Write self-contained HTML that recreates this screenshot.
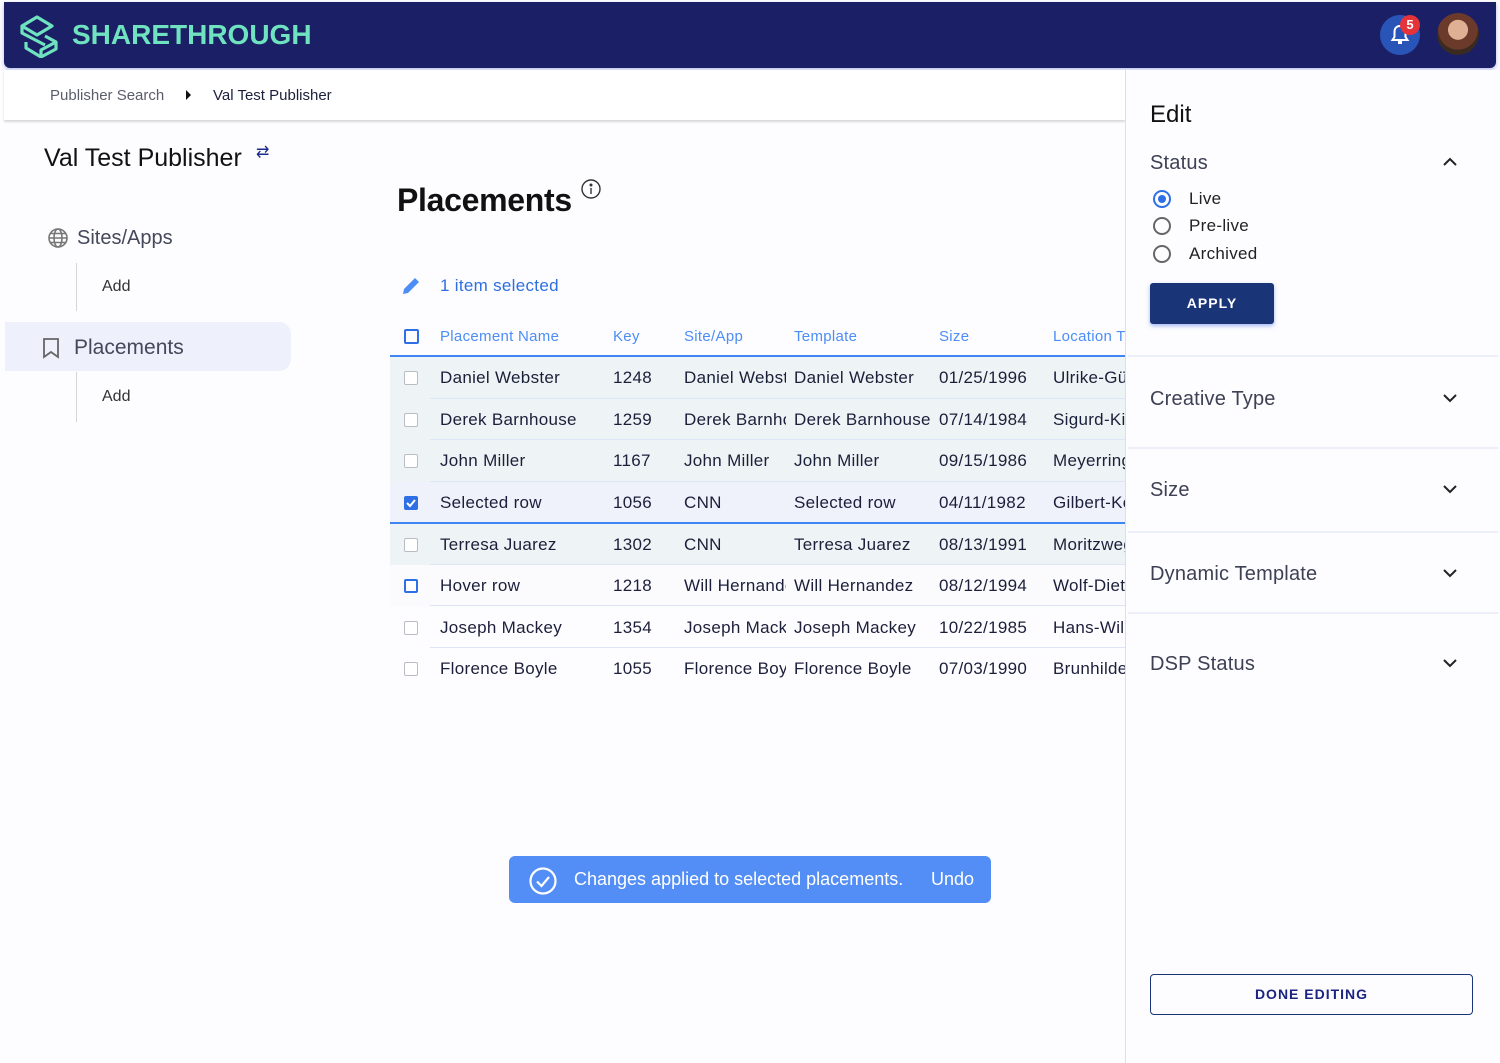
<!DOCTYPE html>
<html><head><meta charset="utf-8"><style>
*{box-sizing:border-box;margin:0;padding:0}
body{width:1500px;height:1063px;position:relative;background:#fdfdff;font-family:"Liberation Sans",Arial,sans-serif;overflow:hidden;color:#1c1f3a}
.a{position:absolute}
.hdr{left:4px;top:2px;width:1492px;height:66px;background:#1b1f66;border-radius:0 0 6px 6px;box-shadow:0 2px 4px rgba(60,80,200,.35)}
.logo{left:72px;top:19px;font-size:28px;font-weight:bold;color:#6fe3bf;letter-spacing:0}
.crumb{left:4px;top:70px;width:1121px;height:50px;background:#fff;box-shadow:0 2px 2px rgba(0,0,0,.15)}
.panel{left:1125px;top:70px;width:375px;height:993px;background:#fdfdff;border-left:1px solid #d9def0}
.row{position:absolute;left:390px;width:735px;height:42px;font-size:17px;color:#1c1f3a;letter-spacing:.3px}
.row span{position:absolute;top:11px;white-space:nowrap;overflow:hidden}
.cb{position:absolute;left:14px;top:14px;width:14px;height:14px;border:1.5px solid #b9bcc4;border-radius:2px;background:#fff}
.sep{position:absolute;left:430px;width:695px;height:1px;background:#dde6f6}
.th{position:absolute;top:328px;font-size:15px;color:#4c8df6;letter-spacing:.3px}
.acc{position:absolute;left:1150px;font-size:20px;color:#3e4054;letter-spacing:.2px}
.hr{position:absolute;left:1128px;width:370px;height:2px;background:#eceff8}
.chev{position:absolute;left:1442px}
</style></head><body>
<div class="a hdr"></div>
<svg class="a" style="left:18px;top:12px" width="44" height="46" viewBox="0 0 44 46" fill="none" stroke="#6fe3bf" stroke-width="3.2" stroke-linejoin="round">
<path d="M4 14 L19 5 L34 14 L19 23 Z"/><path d="M4 14 V21 L27 33"/><path d="M27 24 L38 30 V37 L23 45 L8 36 V30"/><path d="M23 45 V38 L38 30"/></svg>
<div class="a logo">SHARETHROUGH</div>
<div class="a" style="left:1380px;top:15px;width:40px;height:40px;border-radius:50%;background:#2a55b8"></div>
<svg class="a" style="left:1390px;top:24px" width="20" height="22" viewBox="0 0 20 22"><path d="M10 2 C6 2 4.5 5 4.5 8 V13 L2.5 16 H17.5 L15.5 13 V8 C15.5 5 14 2 10 2Z" fill="none" stroke="#fff" stroke-width="2"/><rect x="8" y="17" width="4" height="3" fill="#fff"/></svg>
<div class="a" style="left:1400px;top:15px;width:20px;height:20px;border-radius:50%;background:#e5333a;color:#fff;font-size:13px;font-weight:bold;text-align:center;line-height:20px">5</div>
<div class="a" style="left:1437px;top:13px;width:42px;height:42px;border-radius:50%;background:radial-gradient(circle at 50% 40%,#e0b095 0 30%,#6b3a2a 31% 60%,#3a2a20 61%)"></div>

<div class="a crumb"></div>
<div class="a" style="left:50px;top:87px;font-size:15px;color:#5b5d6b">Publisher Search</div>
<div class="a" style="left:186px;top:90px;width:0;height:0;border-left:5px solid #111;border-top:5px solid transparent;border-bottom:5px solid transparent"></div>
<div class="a" style="left:213px;top:87px;font-size:15px;color:#1c1f3a">Val Test Publisher</div>

<div class="a" style="left:44px;top:144px;font-size:25px;color:#111">Val Test Publisher</div>
<div class="a" style="left:256px;top:142px;font-size:16px;color:#1b2c8a">⇄</div>
<svg class="a" style="left:47px;top:227px" width="22" height="22" viewBox="0 0 22 22" fill="none" stroke="#777" stroke-width="1.6"><circle cx="11" cy="11" r="9"/><ellipse cx="11" cy="11" rx="4" ry="9"/><path d="M2 11H20M3.5 6.5H18.5M3.5 15.5H18.5"/></svg>
<div class="a" style="left:77px;top:227px;font-size:20px;color:#45475a">Sites/Apps</div>
<div class="a" style="left:76px;top:263px;width:1px;height:48px;background:#d5d5d5"></div>
<div class="a" style="left:102px;top:278px;font-size:16px;color:#333">Add</div>
<div class="a" style="left:5px;top:322px;width:286px;height:49px;background:#eef0fc;border-radius:0 12px 12px 0"></div>
<svg class="a" style="left:42px;top:337px" width="18" height="22" viewBox="0 0 18 22" fill="none" stroke="#666" stroke-width="1.8"><path d="M2 2H16V20L9 15L2 20Z"/></svg>
<div class="a" style="left:74px;top:336px;font-size:21px;color:#45475a">Placements</div>
<div class="a" style="left:76px;top:372px;width:1px;height:50px;background:#d5d5d5"></div>
<div class="a" style="left:102px;top:388px;font-size:16px;color:#333">Add</div>

<div class="a" style="left:397px;top:182px;font-size:32px;font-weight:bold;color:#111;letter-spacing:-0.3px">Placements</div>
<svg class="a" style="left:580px;top:178px" width="22" height="22" viewBox="0 0 22 22" fill="none" stroke="#333" stroke-width="1.4"><circle cx="11" cy="11" r="9"/><path d="M11 10V16"/><circle cx="11" cy="7" r=".8" fill="#333"/></svg>
<svg class="a" style="left:400px;top:275px" width="22" height="22" viewBox="0 0 22 22"><path d="M3 19 L4 14 L15 3 L19 7 L8 18 Z" fill="#4c8df6"/></svg>
<div class="a" style="left:440px;top:276px;font-size:17px;color:#2d6fe0;letter-spacing:.3px">1 item selected</div>

<div class="a" style="left:404px;top:329px;width:15px;height:15px;border:2px solid #2f6fe6;border-radius:2px"></div>
<div class="th" style="left:440px">Placement Name</div>
<div class="th" style="left:613px">Key</div>
<div class="th" style="left:684px">Site/App</div>
<div class="th" style="left:794px">Template</div>
<div class="th" style="left:939px">Size</div>
<div class="th" style="left:1053px;width:72px;overflow:hidden;white-space:nowrap">Location Type</div>
<div class="a" style="left:390px;top:355px;width:735px;height:2px;background:#3f86f2"></div>

<div class="row" style="top:357px;background:#eef4f5"><div class="cb"></div><span style="left:50px">Daniel Webster</span><span style="left:223px">1248</span><span style="left:294px;width:102px">Daniel Webster</span><span style="left:404px">Daniel Webster</span><span style="left:549px">01/25/1996</span><span style="left:663px;width:72px">Ulrike-Günther</span></div>
<div class="row" style="top:399px;background:#eef4f5"><div class="cb"></div><span style="left:50px">Derek Barnhouse</span><span style="left:223px">1259</span><span style="left:294px;width:102px">Derek Barnhouse</span><span style="left:404px">Derek Barnhouse</span><span style="left:549px">07/14/1984</span><span style="left:663px;width:72px">Sigurd-Kirsten</span></div>
<div class="row" style="top:440px;background:#eef4f5"><div class="cb"></div><span style="left:50px">John Miller</span><span style="left:223px">1167</span><span style="left:294px;width:102px">John Miller</span><span style="left:404px">John Miller</span><span style="left:549px">09/15/1986</span><span style="left:663px;width:72px">Meyerring</span></div>
<div class="row" style="top:482px;background:#eff1fb"><div class="cb" style="background:#2f6fe6;border-color:#2f6fe6"><svg width="12" height="12" viewBox="0 0 12 12" style="position:absolute;left:0;top:0"><path d="M2 6 L5 9 L10 3" fill="none" stroke="#fff" stroke-width="2"/></svg></div><span style="left:50px">Selected row</span><span style="left:223px">1056</span><span style="left:294px">CNN</span><span style="left:404px">Selected row</span><span style="left:549px">04/11/1982</span><span style="left:663px;width:72px">Gilbert-Kern</span></div>
<div class="a" style="left:390px;top:522px;width:735px;height:2px;background:#3f86f2"></div>
<div class="row" style="top:524px;background:#eef4f5"><div class="cb"></div><span style="left:50px">Terresa Juarez</span><span style="left:223px">1302</span><span style="left:294px">CNN</span><span style="left:404px">Terresa Juarez</span><span style="left:549px">08/13/1991</span><span style="left:663px;width:72px">Moritzweg</span></div>
<div class="row" style="top:565px;background:#fbfbfe"><div class="cb" style="border:2px solid #2f6fe6"></div><span style="left:50px">Hover row</span><span style="left:223px">1218</span><span style="left:294px;width:102px">Will Hernandez</span><span style="left:404px">Will Hernandez</span><span style="left:549px">08/12/1994</span><span style="left:663px;width:72px">Wolf-Dieter</span></div>
<div class="row" style="top:607px"><div class="cb"></div><span style="left:50px">Joseph Mackey</span><span style="left:223px">1354</span><span style="left:294px;width:102px">Joseph Mackey</span><span style="left:404px">Joseph Mackey</span><span style="left:549px">10/22/1985</span><span style="left:663px;width:72px">Hans-Wilhelm</span></div>
<div class="row" style="top:648px"><div class="cb"></div><span style="left:50px">Florence Boyle</span><span style="left:223px">1055</span><span style="left:294px;width:102px">Florence Boyle</span><span style="left:404px">Florence Boyle</span><span style="left:549px">07/03/1990</span><span style="left:663px;width:72px">Brunhilde</span></div>
<div class="sep" style="top:398px"></div><div class="sep" style="top:439px"></div><div class="sep" style="top:481px"></div><div class="sep" style="top:564px"></div><div class="sep" style="top:605px"></div><div class="sep" style="top:647px"></div>

<div class="a" style="left:509px;top:856px;width:482px;height:47px;background:#528ef5;border-radius:6px"></div>
<svg class="a" style="left:528px;top:866px" width="30" height="30" viewBox="0 0 30 30" fill="none" stroke="#fff" stroke-width="2.2"><circle cx="15" cy="15" r="12.5"/><path d="M9 15.5 L13.5 20 L21 11"/></svg>
<div class="a" style="left:574px;top:869px;font-size:18px;color:#fff">Changes applied to selected placements.</div>
<div class="a" style="left:931px;top:869px;font-size:18px;color:#fff">Undo</div>

<div class="a panel"></div>
<div class="a" style="left:1150px;top:101px;font-size:24px;color:#111">Edit</div>
<div class="acc" style="top:152px">Status</div>
<svg class="chev" style="top:156px" width="16" height="12" viewBox="0 0 16 12" fill="none" stroke="#222" stroke-width="2"><path d="M2 9 L8 3 L14 9"/></svg>
<div class="a" style="left:1153px;top:190px;width:18px;height:18px;border:2px solid #2f6fe6;border-radius:50%"></div>
<div class="a" style="left:1158px;top:195px;width:8px;height:8px;background:#2f6fe6;border-radius:50%"></div>
<div class="a" style="left:1153px;top:217px;width:18px;height:18px;border:2px solid #666;border-radius:50%"></div>
<div class="a" style="left:1153px;top:245px;width:18px;height:18px;border:2px solid #666;border-radius:50%"></div>
<div class="a" style="left:1189px;top:189px;font-size:17px;color:#222;letter-spacing:.3px">Live</div>
<div class="a" style="left:1189px;top:216px;font-size:17px;color:#222;letter-spacing:.3px">Pre-live</div>
<div class="a" style="left:1189px;top:244px;font-size:17px;color:#222;letter-spacing:.3px">Archived</div>
<div class="a" style="left:1150px;top:283px;width:124px;height:41px;background:#1a3577;border-radius:3px;box-shadow:0 2px 4px rgba(60,100,230,.45);color:#fff;font-size:14px;font-weight:bold;text-align:center;line-height:41px;letter-spacing:1px">APPLY</div>
<div class="hr" style="top:355px"></div>
<div class="acc" style="top:388px">Creative Type</div>
<svg class="chev" style="top:392px" width="16" height="12" viewBox="0 0 16 12" fill="none" stroke="#222" stroke-width="2"><path d="M2 3 L8 9 L14 3"/></svg>
<div class="hr" style="top:447px"></div>
<div class="acc" style="top:479px">Size</div>
<svg class="chev" style="top:483px" width="16" height="12" viewBox="0 0 16 12" fill="none" stroke="#222" stroke-width="2"><path d="M2 3 L8 9 L14 3"/></svg>
<div class="hr" style="top:531px"></div>
<div class="acc" style="top:563px">Dynamic Template</div>
<svg class="chev" style="top:567px" width="16" height="12" viewBox="0 0 16 12" fill="none" stroke="#222" stroke-width="2"><path d="M2 3 L8 9 L14 3"/></svg>
<div class="hr" style="top:612px"></div>
<div class="acc" style="top:653px">DSP Status</div>
<svg class="chev" style="top:657px" width="16" height="12" viewBox="0 0 16 12" fill="none" stroke="#222" stroke-width="2"><path d="M2 3 L8 9 L14 3"/></svg>
<div class="a" style="left:1150px;top:974px;width:323px;height:41px;border:1.5px solid #1a3577;border-radius:4px;color:#1b2580;font-size:14px;font-weight:bold;text-align:center;line-height:39px;letter-spacing:1px">DONE EDITING</div>
</body></html>
